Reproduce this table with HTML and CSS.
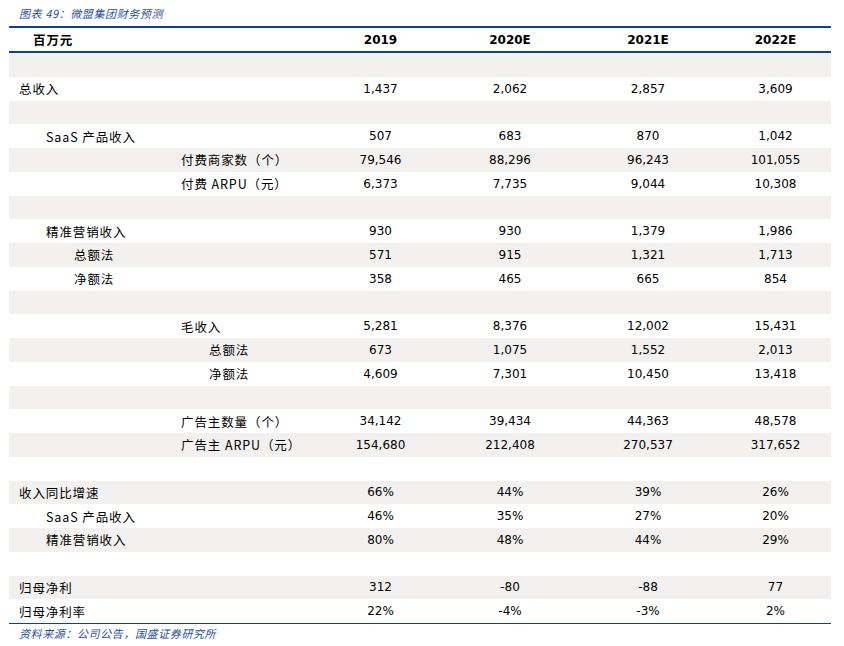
FILE: index.html
```html
<!DOCTYPE html>
<html lang="zh">
<head>
<meta charset="utf-8">
<link rel="stylesheet" href="styles.css">
</head>
<body>
<div class="sheet">
  <div class="caption">图表 49：微盟集团财务预测</div>
  <div class="table">
    <div class="row head">
      <div class="label l-head">百万元</div>
      <div class="num">2019</div><div class="num">2020E</div><div class="num">2021E</div><div class="num">2022E</div>
    </div>
    <div class="row gray"><div class="label"></div></div>
    <div class="row"><div class="label l0">总收入</div><div class="num">1,437</div><div class="num">2,062</div><div class="num">2,857</div><div class="num">3,609</div></div>
    <div class="row gray"><div class="label"></div></div>
    <div class="row"><div class="label l1">SaaS 产品收入</div><div class="num">507</div><div class="num">683</div><div class="num">870</div><div class="num">1,042</div></div>
    <div class="row gray"><div class="label l3">付费商家数（个）</div><div class="num">79,546</div><div class="num">88,296</div><div class="num">96,243</div><div class="num">101,055</div></div>
    <div class="row"><div class="label l3">付费 ARPU（元）</div><div class="num">6,373</div><div class="num">7,735</div><div class="num">9,044</div><div class="num">10,308</div></div>
    <div class="row gray"><div class="label"></div></div>
    <div class="row"><div class="label l1">精准营销收入</div><div class="num">930</div><div class="num">930</div><div class="num">1,379</div><div class="num">1,986</div></div>
    <div class="row gray"><div class="label l2">总额法</div><div class="num">571</div><div class="num">915</div><div class="num">1,321</div><div class="num">1,713</div></div>
    <div class="row"><div class="label l2">净额法</div><div class="num">358</div><div class="num">465</div><div class="num">665</div><div class="num">854</div></div>
    <div class="row gray"><div class="label"></div></div>
    <div class="row"><div class="label l3">毛收入</div><div class="num">5,281</div><div class="num">8,376</div><div class="num">12,002</div><div class="num">15,431</div></div>
    <div class="row gray"><div class="label l4">总额法</div><div class="num">673</div><div class="num">1,075</div><div class="num">1,552</div><div class="num">2,013</div></div>
    <div class="row"><div class="label l4">净额法</div><div class="num">4,609</div><div class="num">7,301</div><div class="num">10,450</div><div class="num">13,418</div></div>
    <div class="row gray"><div class="label"></div></div>
    <div class="row"><div class="label l3">广告主数量（个）</div><div class="num">34,142</div><div class="num">39,434</div><div class="num">44,363</div><div class="num">48,578</div></div>
    <div class="row gray"><div class="label l3">广告主 ARPU（元）</div><div class="num">154,680</div><div class="num">212,408</div><div class="num">270,537</div><div class="num">317,652</div></div>
    <div class="row"><div class="label"></div></div>
    <div class="row gray"><div class="label l0">收入同比增速</div><div class="num">66%</div><div class="num">44%</div><div class="num">39%</div><div class="num">26%</div></div>
    <div class="row"><div class="label l1">SaaS 产品收入</div><div class="num">46%</div><div class="num">35%</div><div class="num">27%</div><div class="num">20%</div></div>
    <div class="row gray"><div class="label l1">精准营销收入</div><div class="num">80%</div><div class="num">48%</div><div class="num">44%</div><div class="num">29%</div></div>
    <div class="row"><div class="label"></div></div>
    <div class="row gray"><div class="label l0">归母净利</div><div class="num">312</div><div class="num">-80</div><div class="num">-88</div><div class="num">77</div></div>
    <div class="row"><div class="label l0">归母净利率</div><div class="num">22%</div><div class="num">-4%</div><div class="num">-3%</div><div class="num">2%</div></div>
  </div>
  <div class="source">资料来源：公司公告，国盛证券研究所</div>
</div>
</body>
</html>
```
FILE: styles.css
```css
html, body {
  margin: 0;
  padding: 0;
  background: #ffffff;
}
.sheet {
  width: 822px;
  margin-left: 9px;
  font-family: "Noto Sans CJK SC", sans-serif;
  color: #000;
}
.caption, .source {
  font-style: italic;
  color: #1f4f9c;
  font-size: 11px;
  padding-left: 10px;
  letter-spacing: 0.6px;
}
.caption {
  height: 26px;
  line-height: 26px;
}
.source {
  border-top: 1px solid #0b4391;
  height: 19px;
  line-height: 19px;
}
.row {
  display: grid;
  grid-template-columns: 308px 127px 132px 144px 111px;
  height: 23.75px;
  align-items: center;
}
.row.gray {
  background: #f2f1ef;
}
.row.head {
  height: 23px;
  border-top: 2px solid #0b4391;
  border-bottom: 2px solid #0b4391;
}
.label {
  font-size: 12.5px;
  letter-spacing: 0.9px;
  white-space: nowrap;
}
.l-head { padding-left: 24px; font-weight: bold; }
.l0 { padding-left: 10px; }
.l1 { padding-left: 37px; }
.l2 { padding-left: 65px; }
.l3 { padding-left: 172px; }
.l4 { padding-left: 200px; }
.num {
  font-family: "DejaVu Sans", sans-serif;
  font-size: 12px;
  text-align: center;
}
.head .num {
  font-weight: bold;
}
```
